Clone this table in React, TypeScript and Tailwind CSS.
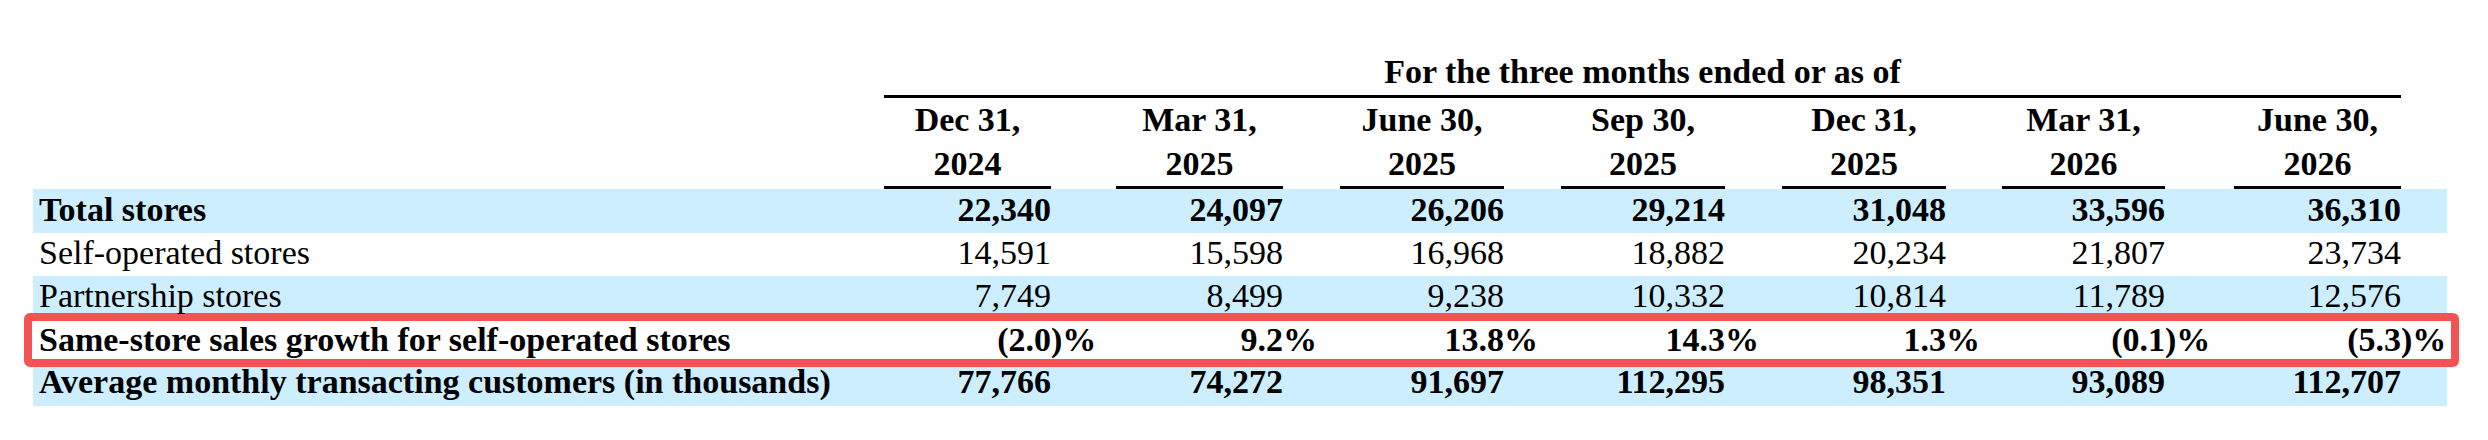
const GRID =
  "grid grid-cols-[851px_167px_65px_167px_57px_164px_57px_164px_57px_164px_56px_163px_69px_167px_46px]";

const periods = [
  ["Dec 31,", "2024"],
  ["Mar 31,", "2025"],
  ["June 30,", "2025"],
  ["Sep 30,", "2025"],
  ["Dec 31,", "2025"],
  ["Mar 31,", "2026"],
  ["June 30,", "2026"],
];

type Cell = { value: string; suffix?: string };
type Row = { label: string; cells: Cell[] };

const n = (value: string): Cell => ({ value });

const total: Row = {
  label: "Total stores",
  cells: ["22,340", "24,097", "26,206", "29,214", "31,048", "33,596", "36,310"].map(n),
};

const selfOperated: Row = {
  label: "Self-operated stores",
  cells: ["14,591", "15,598", "16,968", "18,882", "20,234", "21,807", "23,734"].map(n),
};

const partnership: Row = {
  label: "Partnership stores",
  cells: ["7,749", "8,499", "9,238", "10,332", "10,814", "11,789", "12,576"].map(n),
};

// value sits in the column, the closing paren / percent hangs in the gap cell
const sameStore: Row = {
  label: "Same-store sales growth for self-operated stores",
  cells: [
    { value: "(2.0", suffix: ")%" },
    { value: "9.2", suffix: "%" },
    { value: "13.8", suffix: "%" },
    { value: "14.3", suffix: "%" },
    { value: "1.3", suffix: "%" },
    { value: "(0.1", suffix: ")%" },
    { value: "(5.3", suffix: ")%" },
  ],
};

const average: Row = {
  label: "Average monthly transacting customers (in thousands)",
  cells: ["77,766", "74,272", "91,697", "112,295", "98,351", "93,089", "112,707"].map(n),
};

function RowCells({ label, cells }: Row) {
  return (
    <>
      <div className="whitespace-nowrap pl-[6px]">{label}</div>
      {cells.map((c, i) => (
        <div key={i} className="contents">
          <div className="whitespace-nowrap text-right">{c.value}</div>
          <div className="whitespace-nowrap text-left">{c.suffix ?? ""}</div>
        </div>
      ))}
    </>
  );
}

export default function App() {
  return (
    <div className="min-h-screen bg-white pl-[33px] pt-[57px] font-['Liberation_Serif','Times_New_Roman',serif] text-[34px] text-black">
      <div className="w-[2414px]">
        {/* Title */}
        <div className={GRID}>
          <div className="col-[2/15] border-b-[3px] border-black pb-[8px] text-center font-bold leading-[30px]">
            For the three months ended or as of
          </div>
        </div>

        {/* Period headers */}
        <div className={GRID}>
          <div />
          {periods.map(([a, b], i) => (
            <div key={i} className="contents">
              <div className="border-b-[3px] border-black text-center font-bold leading-[44px]">
                <div>{a}</div>
                <div>{b}</div>
              </div>
              <div />
            </div>
          ))}
        </div>

        {/* Body */}
        <div className={`${GRID} h-[44px] bg-[#cceeff] pt-[6px] font-bold leading-[30px]`}>
          <RowCells {...total} />
        </div>
        <div className={`${GRID} h-[43px] bg-white pt-[5px] leading-[30px]`}>
          <RowCells {...selfOperated} />
        </div>
        <div className={`${GRID} h-[37px] bg-[#cceeff] pt-[5px] leading-[30px]`}>
          <RowCells {...partnership} />
        </div>
        <div className="-ml-[9px] -mr-[12px] h-[54px] rounded-md border-[8px] border-[#f45353] bg-white pl-[1px] pt-[4px]">
          <div className={`${GRID} font-bold leading-[30px]`}>
            <RowCells {...sameStore} />
          </div>
        </div>
        <div className={`${GRID} h-[39px] bg-[#cceeff] font-bold leading-[30px]`}>
          <RowCells {...average} />
        </div>
      </div>
    </div>
  );
}
